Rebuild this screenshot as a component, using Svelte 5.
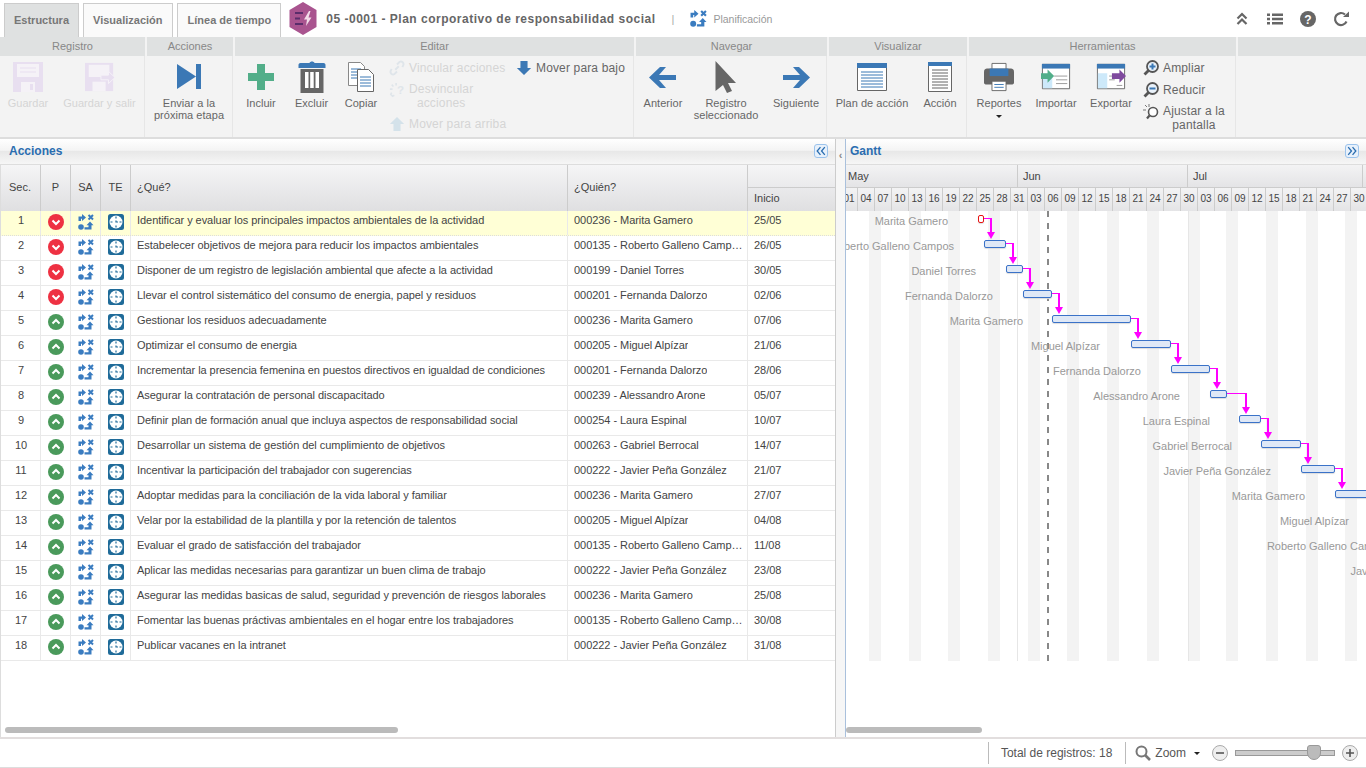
<script lang="ts">
  const actions = [
    ['Identificar y evaluar los principales impactos ambientales de la actividad', '000236 - Marita Gamero', '25/05'],
    ['Estabelecer objetivos de mejora para reducir los impactos ambientales', '000135 - Roberto Galleno Campos', '26/05'],
    ['Disponer de um registro de legislación ambiental que afecte a la actividad', '000199 - Daniel Torres', '30/05'],
    ['Llevar el control sistemático del consumo de energia, papel y residuos', '000201 - Fernanda Dalorzo', '02/06'],
    ['Gestionar los residuos adecuadamente', '000236 - Marita Gamero', '07/06'],
    ['Optimizar el consumo de energia', '000205 - Miguel Alpízar', '21/06'],
    ['Incrementar la presencia femenina en puestos directivos en igualdad de condiciones', '000201 - Fernanda Dalorzo', '28/06'],
    ['Asegurar la contratación de personal discapacitado', '000239 - Alessandro Arone', '05/07'],
    ['Definir plan de formación anual que incluya aspectos de responsabilidad social', '000254 - Laura Espinal', '10/07'],
    ['Desarrollar un sistema de gestión del cumplimiento de objetivos', '000263 - Gabriel Berrocal', '14/07'],
    ['Incentivar la participación del trabajador con sugerencias', '000222 - Javier Peña González', '21/07'],
    ['Adoptar medidas para la conciliación de la vida laboral y familiar', '000236 - Marita Gamero', '27/07'],
    ['Velar por la estabilidad de la plantilla y por la retención de talentos', '000205 - Miguel Alpízar', '04/08'],
    ['Evaluar el grado de satisfacción del trabajador', '000135 - Roberto Galleno Campos', '11/08'],
    ['Aplicar las medidas necesarias para garantizar un buen clima de trabajo', '000222 - Javier Peña González', '23/08'],
    ['Asegurar las medidas basicas de salud, seguridad y prevención de riesgos laborales', '000236 - Marita Gamero', '25/08'],
    ['Fomentar las buenas práctivas ambientales en el hogar entre los trabajadores', '000135 - Roberto Galleno Campos', '30/08'],
    ['Publicar vacanes en la intranet', '000222 - Javier Peña González', '31/08']
  ];

  // bar start / end in px, relative to the gantt panel
  const bars = [
    [132, 138], [138, 160], [160, 177], [177, 206], [206, 285], [285, 325],
    [325, 364], [364, 381], [393, 415], [415, 455], [455, 489], [489, 530]
  ];
  const labelEnds = [102, 108, 130, 147, 177, 254, 295, 334, 364, 386, 425, 459, 503, 545, 612];

  const days = ['01','04','07','10','13','16','19','22','25','28','31','03','06','09','12','15','18','21','24','27','30','03','06','09','12','15','18','21','24','27','30'];
  const weekends = [23, 63, 102, 142, 182, 221, 261, 301, 342, 380, 420, 460, 499];
</script>

{#snippet planIcon()}
  <svg class="sa-icon" viewBox="0 0 16 16">
    <path d="M.5 7V2.500H4V0l4 3.500L4 7V4.700H3V7z" fill="#3a7cc0"/>
    <path d="M10.500 1L15 5.500M15 1l-4.500 4.500" stroke="#3a7cc0" stroke-width="2" fill="none"/>
    <circle cx="3" cy="13" r="2.800" fill="#3a7cc0"/>
    <path d="M6.500 15.500v-2.200h4v-2h-2L12 7.500l3.500 3.800h-2v4.200z" fill="#3a7cc0"/>
  </svg>
{/snippet}

{#snippet typeIcon()}
  <svg class="te-icon" viewBox="0 0 16 16">
    <rect width="16" height="16" rx="2.500" fill="#1f6b99"/>
    <circle cx="8" cy="8" r="6.500" fill="#fff"/>
    <path d="M8 2.500v2M8 11.500v2M2.500 8h2M11.500 8h2M8 6.500V8h2" stroke="#1f6b99" stroke-width="1.200" fill="none"/>
  </svg>
{/snippet}

{#snippet priority(up: boolean)}
  <svg class="prio" viewBox="0 0 16 16">
    <circle cx="8" cy="8" r="8" fill={up ? '#4a9a5b' : '#ee3142'}/>
    <path d={up ? 'M4.500 9.500L8 6l3.500 3.500' : 'M4.500 6.500L8 10l3.500-3.500'} stroke="#fff" stroke-width="2" fill="none"/>
  </svg>
{/snippet}

<div class="page">
  <header class="topbar">
    <nav class="tabs">
      <span class="tab active">Estructura</span>
      <span class="tab">Visualización</span>
      <span class="tab">Línea de tiempo</span>
    </nav>
    <svg class="hexlogo" viewBox="0 0 30 33">
      <path d="M15 0l13.500 8v17L15 33 1.500 25V8z" fill="#a9548f"/>
      <path d="M7 11h8M7 16.500h5M7 22h8" stroke="#5a2d6b" stroke-width="2"/>
      <path d="M21 9l-5 8.500h3L18 24l5.500-8.500h-3l2-6.500z" fill="#f3dce9"/>
    </svg>
    <h1>05 -0001 - Plan corporativo de responsabilidad social</h1>
    <span class="sep">|</span>
    <span class="planicon">{@render planIcon()}</span>
    <span class="stage">Planificación</span>
    <div class="top-actions">
      <svg viewBox="0 0 16 16"><path d="M3.500 7.500L8 3l4.500 4.500M3.500 13L8 8.500l4.500 4.500" stroke="#666" stroke-width="2.200" fill="none"/></svg>
      <svg viewBox="0 0 16 16"><path d="M0 2.500h3v2.400H0zM5 2.500h11v2.400H5zM0 6.800h3v2.400H0zM5 6.800h11v2.400H5zM0 11.100h3v2.400H0zM5 11.100h11v2.400H5z" fill="#666"/></svg>
      <svg viewBox="0 0 16 16"><circle cx="8" cy="8" r="8" fill="#666"/><text x="8" y="12.500" class="q">?</text></svg>
      <svg viewBox="0 0 16 16"><path d="M13.500 10.500A6 6 0 1 1 12 3.500" stroke="#666" stroke-width="2.200" fill="none"/><path d="M10 6h6V.5z" fill="#666"/></svg>
    </div>
  </header>

  <section class="ribbon">
    <div class="group g-reg">
      <div class="group-title">Registro</div>
      <div class="group-body">
        <div class="btn disabled b56">
          <svg viewBox="0 0 30 30"><path d="M0 0h30v30H0z" fill="#e8dff0"/><path d="M4 2h22v13H4z" fill="#f5f2f7"/><path d="M7 6h16M7 10h16" stroke="#e8dff0"/><path d="M8 20h14v10H8z" fill="#f5f2f7"/><path d="M17 22h3v6h-3z" fill="#e8dff0"/></svg>
          <span>Guardar</span>
        </div>
        <div class="btn disabled b87">
          <svg viewBox="0 0 32 30"><path d="M0 0h30v30H0z" fill="#e8dff0"/><path d="M4 2h22v13H4z" fill="#f5f2f7"/><path d="M8 20h14v10H8z" fill="#f5f2f7"/><path d="M17 13h8V9l7 6.500-7 6.500v-4h-8z" fill="#e8dff0" stroke="#f5f2f7"/></svg>
          <span>Guardar y salir</span>
        </div>
      </div>
    </div>

    <div class="group g-acc">
      <div class="group-title">Acciones</div>
      <div class="group-body">
        <div class="btn b84">
          <svg viewBox="0 0 30 30"><path d="M3 2l19 12.500L3 27zM22 2h5v25h-5z" fill="#3b78b5"/></svg>
          <span>Enviar a la<br />próxima etapa</span>
        </div>
      </div>
    </div>

    <div class="group g-edit">
      <div class="group-title">Editar</div>
      <div class="group-body">
        <div class="btn b52">
          <svg viewBox="0 0 30 30"><path d="M11 2h8v9h9v8h-9v9h-8v-9H2v-8h9z" fill="#52ae89"/></svg>
          <span>Incluir</span>
        </div>
        <div class="btn b49">
          <svg class="tall" viewBox="0 0 30 32"><path d="M1.500 7V4c0-1 .5-2 2-2h9c.5-2 4.500-2 5 0h9c1.500 0 2 1 2 2v3z" fill="#3b78b5"/><path d="M3.500 8h23v24h-23z" fill="#666"/><path d="M8 11h3.500v16H8zM13.200 11h3.500v16h-3.500zM18.500 11H22v16h-3.500z" fill="#fff"/></svg>
          <span>Excluir</span>
        </div>
        <div class="btn b50">
          <svg viewBox="0 0 30 30"><path d="M2.500.5h12l4 4v19h-16z" fill="#fff" stroke="#888"/><path d="M5 7h10M5 10h10M5 13h10M5 16h6" stroke="#3b78b5"/><path d="M11.500 7.500h11l5 5v17h-16z" fill="#fff" stroke="#666"/><path d="M14 15h11M14 18h11M14 21h11M14 24h11" stroke="#3b78b5"/></svg>
          <span>Copiar</span>
        </div>
        <div class="edit-col">
          <div class="inline disabled">
            <svg viewBox="0 0 18 18"><path d="M7 11l4-4M3 10l-1 2a3 3 0 0 0 4 4l3-3M15 8l1-2a3 3 0 0 0-4-4L9 5" stroke="#dfe5ea" stroke-width="2.200" fill="none"/></svg>
            <span>Vincular acciones</span>
          </div>
          <div class="inline disabled top">
            <svg viewBox="0 0 18 18"><path d="M3 3l2 2M1 8h3M8 1v3M3 12l-1 2 2 2 2-1" stroke="#dfe5ea" stroke-width="1.800" fill="none"/><text x="9" y="14" class="broken">?</text></svg>
            <span class="center-text">Desvincular<br />acciones</span>
          </div>
          <div class="inline disabled">
            <svg viewBox="0 0 18 18"><path d="M9 1l8 8h-4v8H5V9H1z" fill="#d4e2ea"/></svg>
            <span>Mover para arriba</span>
          </div>
        </div>
        <div class="inline down">
          <svg viewBox="0 0 18 18"><path d="M5 1h8v8h4l-8 8-8-8h4z" fill="#3b78b5"/></svg>
          <span>Mover para bajo</span>
        </div>
      </div>
    </div>

    <div class="group g-nav">
      <div class="group-title">Navegar</div>
      <div class="group-body">
        <div class="btn b54">
          <svg viewBox="0 0 30 30"><path d="M1 15.500L12 5h6l-7 8h17v5H11l7 8h-6z" fill="#3b78b5"/></svg>
          <span>Anterior</span>
        </div>
        <div class="btn b72">
          <svg class="tall" viewBox="0 0 22 32"><path d="M.5 0L21 22h-8l4 8-5 2-4-8-7.500 6z" fill="#666"/></svg>
          <span>Registro<br />seleccionado</span>
        </div>
        <div class="btn b60">
          <svg viewBox="0 0 30 30"><path d="M29 15.500L18 5h-6l7 8H2v5h17l-7 8h6z" fill="#3b78b5"/></svg>
          <span>Siguiente</span>
        </div>
      </div>
    </div>

    <div class="group g-vis">
      <div class="group-title">Visualizar</div>
      <div class="group-body">
        <div class="btn b86">
          <svg viewBox="0 0 30 28"><path d="M.5.500h29v27H.5z" fill="#fff" stroke="#666"/><path d="M0 0h30v5H0z" fill="#3b78b5"/><path d="M4 9h22M4 12h22M4 15h22M4 18h22M4 21h22M4 24h22" stroke="#3b78b5"/></svg>
          <span>Plan de acción</span>
        </div>
        <div class="btn b50">
          <svg viewBox="0 0 24 30"><path d="M.5.500h23v29H.5z" fill="#fff" stroke="#666"/><path d="M0 0h24v4H0z" fill="#3b78b5"/><path d="M4 8h16M4 11h16M4 14h16M4 17h16M4 20h16M4 23h16M4 26h16" stroke="#666"/></svg>
          <span>Acción</span>
        </div>
      </div>
    </div>

    <div class="group g-tools">
      <div class="group-title">Herramientas</div>
      <div class="group-body">
        <div class="btn b60">
          <svg viewBox="0 0 32 30"><path d="M8.500.5h15v8h-15z" fill="#fff" stroke="#666"/><path d="M3 6h26c1 0 3 1 3 3v12c0 1-1 2-3 2H3c-2 0-3-1-3-2V9c0-2 2-3 3-3z" fill="#666"/><path d="M6 6h20v8H6z" fill="#3b78b5"/><path d="M8.500 19.500h15v10h-15z" fill="#fff" stroke="#666"/><path d="M11 23h10M11 26h10" stroke="#3b78b5"/></svg>
          <span>Reportes</span>
          <i class="caret"></i>
        </div>
        <div class="btn b54">
          <svg viewBox="0 0 32 28"><path d="M1.500.5h29v26h-29z" fill="#fff" stroke="#666"/><path d="M1 0h30v5H1z" fill="#3b78b5"/><path d="M2 14h10v12H2z" fill="#cde9fa"/><path d="M14 13h14M16 17h12M16 21h12" stroke="#999"/><path d="M0 10h7V6l7 7-7 7v-4H0z" fill="#52ae89"/></svg>
          <span>Importar</span>
        </div>
        <div class="btn b56">
          <svg viewBox="0 0 32 28"><path d="M1.500.5h29v26h-29z" fill="#fff" stroke="#666"/><path d="M1 0h30v5H1z" fill="#3b78b5"/><path d="M2 10h10v16H2z" fill="#cde9fa"/><path d="M14 13h6M14 17h6M22 23h6" stroke="#999"/><path d="M17 10h8V6l7 7-7 7v-4h-8z" fill="#7f4a9e"/></svg>
          <span>Exportar</span>
        </div>
        <div class="zoom-col">
          <div class="inline">
            <svg viewBox="0 0 16 16"><circle cx="9.500" cy="6.500" r="5.500" fill="#eaf2fa" stroke="#555" stroke-width="1.800"/><path d="M5.500 10.500L1.500 14.500" stroke="#555" stroke-width="2.800"/><path d="M6.500 6.500h6M9.500 3.500v6" stroke="#3b78b5" stroke-width="2"/></svg>
            <span>Ampliar</span>
          </div>
          <div class="inline">
            <svg viewBox="0 0 16 16"><circle cx="9.500" cy="6.500" r="5.500" fill="#eaf2fa" stroke="#555" stroke-width="1.800"/><path d="M5.500 10.500L1.500 14.500" stroke="#555" stroke-width="2.800"/><path d="M6.500 6.500h6" stroke="#3b78b5" stroke-width="2"/></svg>
            <span>Reducir</span>
          </div>
          <div class="inline top">
            <svg viewBox="0 0 16 16"><circle cx="10" cy="8" r="4.500" fill="#fff" stroke="#555" stroke-width="1.600"/><path d="M6.500 11.500l-2.500 3" stroke="#555" stroke-width="2.200"/><path d="M0 6h3M2 1l2 2M6 0v3" stroke="#777"/></svg>
            <span class="center-text">Ajustar a la<br />pantalla</span>
          </div>
        </div>
      </div>
    </div>

    <div class="group rest">
      <div class="group-title"></div>
      <div class="group-body"></div>
    </div>
  </section>

  <main class="panels">
    <section class="panel left">
      <div class="panel-title">
        <span>Acciones</span>
        <button class="collapse" aria-label="Contraer">
          <svg viewBox="0 0 11 11"><path d="M5 2L2 5.500 5 9M9 2L6 5.500 9 9" stroke="#2a6db0" stroke-width="1.200" fill="none"/></svg>
        </button>
      </div>
      <div class="grid-head">
        <div class="th col-sec">Sec.</div>
        <div class="th col-ico">P</div>
        <div class="th col-ico">SA</div>
        <div class="th col-ico">TE</div>
        <div class="th start col-what">¿Qué?</div>
        <div class="th start col-who">¿Quién?</div>
        <div class="th-split">
          <div class="th-empty"></div>
          <div class="th-sub">Inicio</div>
        </div>
      </div>
      <div class="rows">
        {#each actions as [what, who, date], i}
          <div class="row" class:selected={i === 0}>
            <div class="td txt c col-sec">{i + 1}</div>
            <div class="td ico c col-ico">{@render priority(i > 3)}</div>
            <div class="td ico c col-ico">{@render planIcon()}</div>
            <div class="td ico c col-ico">{@render typeIcon()}</div>
            <div class="td txt col-what">{what}</div>
            <div class="td txt col-who"><span class="clip">{who}</span></div>
            <div class="td txt date">{date}</div>
          </div>
        {/each}
      </div>
      <div class="scroll"><div class="thumb thumb-left"></div></div>
    </section>

    <div class="splitter"><span>‹</span></div>

    <section class="panel right">
      <div class="panel-title">
        <span>Gantt</span>
        <button class="collapse" aria-label="Expandir">
          <svg viewBox="0 0 11 11"><path d="M2 2l3 3.500L2 9M6 2l3 3.500L6 9" stroke="#2a6db0" stroke-width="1.200" fill="none"/></svg>
        </button>
      </div>
      <div class="months">
        <div class="month m-may">May</div>
        <div class="month m-jun">Jun</div>
        <div class="month m-jul">Jul</div>
      </div>
      <div class="days">
        {#each days as d}
          <div class="day">{d}</div>
        {/each}
      </div>
      <div class="chart">
        {#each weekends as x}
          <div class="stripe" style="left:{x}px"></div>
        {/each}
        <div class="mline" style="left:171px"></div>
        <div class="mline" style="left:342px"></div>
        <div class="today"></div>
        {#each labelEnds as end, i}
          <div class="glabel" style="right:{520 - end}px;top:{i * 25}px">{actions[i][1].split(' - ')[1]}</div>
        {/each}
        {#each bars as [a, b], i}
          <div class="bar" class:first={i === 0} style="left:{a}px;width:{b - a}px;top:{i * 25 + 4}px"></div>
          {#if i < bars.length - 1}
            <div class="link" style="left:{b}px;top:{i * 25 + 7}px;width:{bars[i + 1][0] - b + 8}px"></div>
            <div class="arrow" style="left:{bars[i + 1][0] + 3}px;top:{i * 25 + 21}px"></div>
          {/if}
        {/each}
      </div>
      <div class="scroll"><div class="thumb thumb-right"></div></div>
    </section>
  </main>

  <footer class="status">
    <span class="total">Total de registros: 18</span>
    <span class="zoom-label">
      <svg viewBox="0 0 16 16"><circle cx="6.500" cy="6.500" r="5" fill="none" stroke="#777" stroke-width="2"/><path d="M10 10l5 5" stroke="#777" stroke-width="2.600"/></svg>
      Zoom
      <i class="caret"></i>
    </span>
    <svg class="round minus" viewBox="0 0 16 16"><circle cx="8" cy="8" r="7.500" fill="#eee" stroke="#aaa"/><path d="M4 8h8" stroke="#555" stroke-width="1.600"/></svg>
    <div class="slider"><div class="handle"></div></div>
    <svg class="round" viewBox="0 0 16 16"><circle cx="8" cy="8" r="7.500" fill="#eee" stroke="#aaa"/><path d="M4 8h8M8 4v8" stroke="#555" stroke-width="1.600"/></svg>
  </footer>
</div>

<style>
  :global(body) {
    margin: 0;
    background: #fff;
  }

  .page {
    width: 1366px;
    height: 768px;
    display: flex;
    flex-direction: column;
    overflow: hidden;
    font-family: 'Liberation Sans', Arial, sans-serif;
    font-size: 11px;
    color: #666;
  }

  .topbar {
    height: 37px;
    display: flex;
    align-items: center;
    flex: none;
    padding-left: 4px;
  }

  .tabs {
    display: flex;
    align-self: flex-end;
    gap: 4px;
  }

  .tab {
    height: 34px;
    box-sizing: border-box;
    border: 1px solid #ccc;
    border-bottom: none;
    padding: 0 9px;
    line-height: 32px;
    font-weight: bold;
    color: #777;
    background: #fafafa;
  }

  .tab:last-child {
    padding-left: 10px;
  }

  .tab.active {
    background: #dfe1e1;
  }

  .hexlogo {
    width: 30px;
    height: 33px;
    margin: 0 8px 0 7px;
  }

  h1 {
    margin: 0;
    font-size: 12px;
    font-weight: bold;
    color: #666;
    letter-spacing: 0.5px;
  }

  .sep {
    margin: 0 16px;
    color: #aaa;
  }

  .planicon .sa-icon {
    display: block;
    width: 17px;
    height: 17px;
  }

  .stage {
    margin-left: 6px;
    font-size: 10.5px;
    color: #999;
  }

  .top-actions {
    margin-left: auto;
    display: flex;
    gap: 17px;
    padding-right: 17px;
  }

  .top-actions svg {
    width: 16px;
    height: 16px;
  }

  .q {
    font: bold 12px 'Liberation Sans', sans-serif;
    fill: #fff;
    text-anchor: middle;
  }

  .ribbon {
    height: 100px;
    flex: none;
    display: flex;
    gap: 2px;
    background: #f3f3f3;
  }

  .group {
    display: flex;
    flex-direction: column;
    box-sizing: border-box;
    flex: none;
  }

  .g-reg { width: 145px; }
  .g-acc { width: 86px; }
  .g-edit { width: 399px; }
  .g-nav { width: 191px; }
  .g-vis { width: 138px; }
  .g-tools { width: 267px; }

  .group.rest {
    flex: 1;
  }

  .group-title {
    height: 19px;
    flex: none;
    line-height: 19px;
    text-align: center;
    color: #888;
    background: #dfe1e1;
  }

  .group-body {
    flex: 1;
    display: flex;
    padding-top: 6px;
    border-right: 1px solid #e6e6e6;
    font-size: 11px;
    min-width: 0;
  }

  .rest .group-body {
    border-right: none;
  }

  .btn {
    display: flex;
    flex-direction: column;
    align-items: center;
    flex: none;
    text-align: center;
    line-height: 12px;
    letter-spacing: 0.03px;
  }

  .b49 { width: 49px; }
  .b50 { width: 50px; }
  .b52 { width: 52px; }
  .b54 { width: 54px; }
  .b56 { width: 56px; }
  .b60 { width: 60px; }
  .b72 { width: 72px; }
  .b84 { width: 84px; }
  .b86 { width: 86px; }
  .b87 { width: 87px; }

  .g-nav .b60 {
    margin-left: 4px;
  }

  .btn svg {
    width: 30px;
    height: 30px;
    margin-bottom: 5px;
    flex: none;
  }

  .btn svg.tall {
    height: 32px;
    margin-top: -1px;
    margin-bottom: 4px;
  }

  .btn.disabled,
  .disabled {
    color: #d5d5d5;
  }

  .edit-col,
  .zoom-col {
    display: flex;
    flex-direction: column;
    flex: none;
  }

  .edit-col {
    margin: -2px 0 0 3px;
    width: 127px;
    gap: 6px;
  }

  .inline {
    display: flex;
    align-items: center;
    gap: 4px;
    font-size: 12px;
    line-height: 14px;
    letter-spacing: 0.15px;
  }

  .inline.top {
    align-items: flex-start;
  }

  .inline svg {
    width: 16px;
    height: 16px;
    flex: none;
  }

  .center-text {
    text-align: center;
  }

  .broken {
    font: bold 13px 'Liberation Sans', sans-serif;
    fill: #dfe5ea;
  }

  .down {
    align-self: flex-start;
    margin-top: -2px;
  }

  .zoom-col {
    margin: -2px 0 0 4px;
    gap: 6px;
  }

  .caret {
    display: block;
    width: 0;
    height: 0;
    margin-top: 6px;
    border: 3px solid transparent;
    border-top-color: #222;
    border-bottom: none;
  }

  .panels {
    flex: 1;
    min-height: 0;
    display: flex;
    border-top: 2px solid #ddd;
    border-bottom: 2px solid #e2dede;
  }

  .panel {
    display: flex;
    flex-direction: column;
    position: relative;
    overflow: hidden;
  }

  .panel.left {
    width: 836px;
    flex: none;
    border-right: 1px solid #ccc;
    box-sizing: border-box;
  }

  .panel.left::before {
    content: '';
    position: absolute;
    left: 0;
    top: 26px;
    bottom: 0;
    width: 1px;
    background: #ddd;
  }

  .panel.right {
    flex: 1;
    border-left: 1px solid #a9c0dc;
    box-sizing: border-box;
  }

  .splitter {
    width: 9px;
    flex: none;
    background: #f6f6f6;
    display: flex;
    justify-content: center;
    padding-top: 10px;
    box-sizing: border-box;
    color: #888;
    font-weight: bold;
  }

  .panel-title {
    height: 26px;
    flex: none;
    display: flex;
    align-items: center;
    justify-content: space-between;
    padding: 0 7px 2px 9px;
    box-sizing: border-box;
    background: linear-gradient(#fff, #f4f4f4 45%, #e8e8e8 50%, #f6f6f6);
    border-bottom: 1px solid #ddd;
    color: #2a6db0;
    font-size: 12px;
    font-weight: bold;
  }

  .panel.right .panel-title {
    padding-left: 4px;
    padding-right: 7px;
  }

  .collapse {
    width: 14px;
    height: 14px;
    padding: 0;
    border: 1px solid #9cc3ec;
    border-radius: 3px;
    background: #e8f1fb;
    display: flex;
  }

  .collapse svg {
    width: 12px;
    height: 12px;
  }

  .grid-head {
    height: 46px;
    flex: none;
    display: flex;
    background: linear-gradient(#f5f5f6, #dfdfe1);
  }

  .col-sec { width: 41px; }
  .col-ico { width: 30px; }
  .col-what { width: 437px; }
  .col-who { width: 180px; }

  .th {
    display: flex;
    align-items: center;
    justify-content: center;
    box-sizing: border-box;
    padding-bottom: 2px;
    border-right: 1px solid #ccc;
    flex: none;
    color: #444;
  }

  .th.start {
    justify-content: flex-start;
    padding-left: 6px;
  }

  .th-split {
    flex: 1;
    display: flex;
    flex-direction: column;
  }

  .th-empty {
    height: 22px;
    border-bottom: 1px solid #ccc;
  }

  .th-sub {
    flex: 1;
    display: flex;
    align-items: center;
    padding: 0 0 4px 6px;
    color: #444;
  }

  .rows {
    flex: 1;
  }

  .row {
    height: 25px;
    display: flex;
    box-sizing: border-box;
    border-bottom: 1px solid #e9e9e9;
    color: #444;
    letter-spacing: -0.05px;
  }

  .row.selected {
    background: #ffffd6;
    border-bottom: 1px dotted #ddd;
  }

  .td {
    flex: none;
    display: flex;
    align-items: center;
    box-sizing: border-box;
    border-right: 1px solid #e9e9e9;
    white-space: nowrap;
    overflow: hidden;
  }

  .td.txt {
    padding: 0 4px 7px 6px;
  }

  .td.ico {
    padding-bottom: 2px;
  }

  .td.c {
    justify-content: center;
  }

  .td.date {
    flex: 1;
    border-right: none;
  }

  .clip {
    overflow: hidden;
    text-overflow: ellipsis;
  }

  .prio,
  .te-icon,
  .sa-icon {
    width: 16px;
    height: 16px;
    display: block;
  }

  .scroll {
    height: 8px;
    position: absolute;
    left: 0;
    right: 0;
    bottom: 2px;
  }

  .thumb {
    height: 6px;
    border-radius: 3px;
    background: #bbb;
  }

  .thumb-left {
    width: 393px;
    margin-left: 5px;
  }

  .thumb-right {
    width: 136px;
  }

  .months,
  .days {
    display: flex;
    flex: none;
    overflow: hidden;
    background: linear-gradient(#f3f3f4, #e4e4e6);
  }

  .months {
    height: 23px;
    border-bottom: 1px solid #ccc;
    box-sizing: border-box;
  }

  .month {
    flex: none;
    box-sizing: border-box;
    padding: 5px 0 0 5px;
    border-right: 1px solid #ccc;
    color: #444;
  }

  .m-may {
    width: 175px;
    margin-left: -3px;
  }

  .m-jun { width: 170px; }
  .m-jul { width: 175px; }

  .days {
    height: 23px;
    margin-left: -5px;
  }

  .day {
    flex: none;
    width: 17px;
    box-sizing: border-box;
    border-right: 1px solid #ccc;
    text-align: center;
    line-height: 22px;
    font-size: 10px;
    color: #444;
  }

  .chart {
    position: relative;
    height: 450px;
    flex: none;
    overflow: hidden;
  }

  .stripe {
    position: absolute;
    top: 0;
    bottom: 0;
    width: 12px;
    background: #f3f3f3;
  }

  .mline {
    position: absolute;
    top: 0;
    bottom: 0;
    width: 1px;
    background: #e6e6e6;
  }

  .today {
    position: absolute;
    left: 201px;
    top: 0;
    bottom: 0;
    width: 2px;
    background: repeating-linear-gradient(#888 0 6px, transparent 6px 12px);
  }

  .glabel {
    position: absolute;
    height: 20px;
    line-height: 20px;
    white-space: nowrap;
    color: #999;
  }

  .bar {
    position: absolute;
    height: 8px;
    border: 1px solid #3a72c8;
    border-radius: 2px;
    background: #dfe8f6;
    box-sizing: border-box;
    box-shadow: 0 1px 1px #ddd;
  }

  .bar.first {
    border-color: #e81414;
    background: #fff;
  }

  .link {
    position: absolute;
    height: 15px;
    box-sizing: border-box;
    border-top: 1px solid #f0f;
    border-right: 2px solid #f0f;
  }

  .arrow {
    position: absolute;
    width: 0;
    height: 0;
    border: 4px solid transparent;
    border-top: 7px solid #f0f;
    border-bottom: none;
  }

  .status {
    height: 28px;
    flex: none;
    display: flex;
    align-items: center;
    justify-content: flex-end;
    padding-right: 8px;
    border-bottom: 1px solid #ddd;
    color: #555;
    font-size: 12px;
  }

  .total {
    border-left: 1px solid #bbb;
    border-right: 1px solid #bbb;
    padding: 0 13px 0 12px;
    line-height: 22px;
  }

  .zoom-label {
    display: flex;
    align-items: center;
    gap: 4px;
    margin-left: 9px;
  }

  .zoom-label svg {
    width: 16px;
    height: 16px;
  }

  .zoom-label .caret {
    margin: 1px 0 0 4px;
  }

  .round {
    width: 16px;
    height: 16px;
  }

  .round.minus {
    margin-left: 12px;
  }

  .slider {
    position: relative;
    width: 100px;
    height: 6px;
    margin: 0 7px;
    border: 1px solid #999;
    background: #ccc;
    box-sizing: border-box;
  }

  .handle {
    position: absolute;
    left: 71px;
    top: -6px;
    width: 14px;
    height: 15px;
    border-radius: 3px 3px 7px 7px;
    background: #bbb;
    border: 1px solid #999;
    box-sizing: border-box;
  }
</style>
